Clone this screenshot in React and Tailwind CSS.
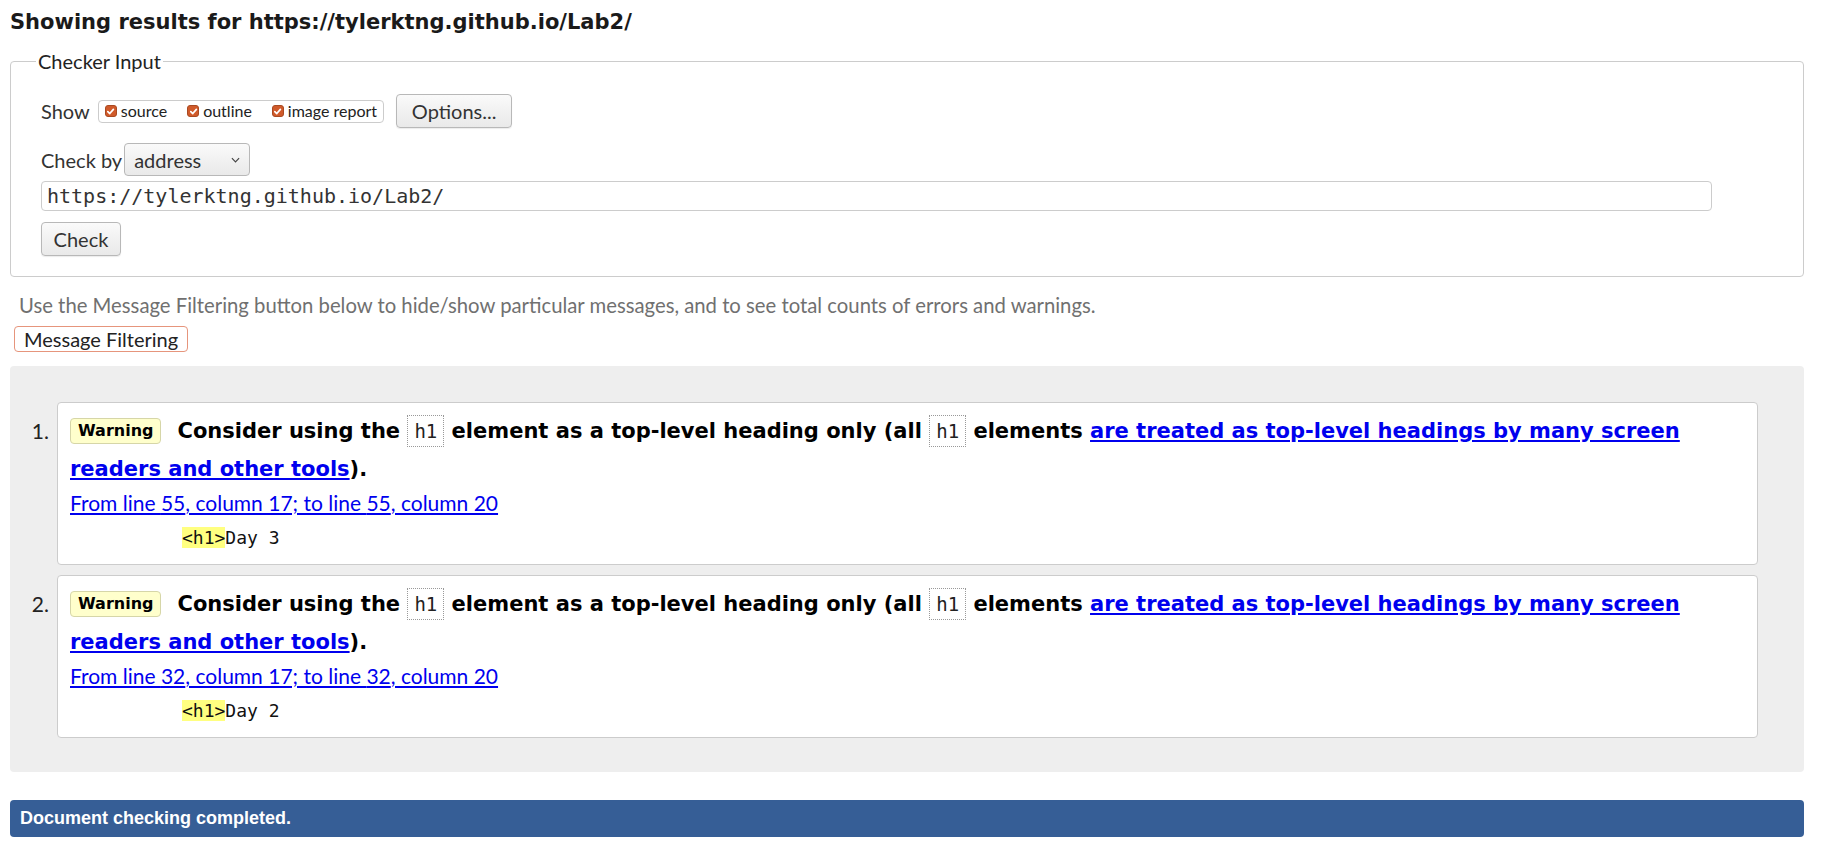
import React from 'react';

// casilla marcada del formulario
function Tick() {
  return (
    <span className="flex items-center justify-center w-[12px] h-[12px] rounded-[3px] bg-[#d05a2a] border border-[#a94a22] shrink-0">
      <svg viewBox="0 0 10 10" className="w-[9px] h-[9px]">
        <path d="M2 5.2 L4.2 7.3 L8.2 2.6" stroke="white" strokeWidth="1.9" fill="none" strokeLinecap="round" strokeLinejoin="round" />
      </svg>
    </span>
  );
}

function Message({ n, line }) {
  return (
    <li className="flex">
      <span className="w-[47px] shrink-0 pr-[8px] pt-[10px] text-right text-[21px] leading-[38px] text-[#222]">{n}.</span>
      <div className="flex-1 bg-white border border-[#ccc] rounded-[4px] pl-[12px] pr-[12px] pt-[9px] pb-[15px]">
        <p className="font-['DejaVu_Sans',sans-serif] font-bold text-[21px] leading-[38px] text-black">
          <span className="inline-block align-[2px] mr-[16px] px-[7px] bg-[#ffffcc] border border-[#d6d6a8] rounded-[4px] text-[16px] leading-[24px]">Warning</span>
          Consider using the{' '}
          <code className="border border-dotted border-[#999] px-[6px] py-[4px] font-['DejaVu_Sans_Mono',monospace] font-normal text-[19px] text-[#222]">h1</code>{' '}
          element as a top-level heading only (all{' '}
          <code className="border border-dotted border-[#999] px-[6px] py-[4px] font-['DejaVu_Sans_Mono',monospace] font-normal text-[19px] text-[#222]">h1</code>{' '}
          elements{' '}
          <a href="#" className="text-[#0000ee] underline">are treated as top-level headings by many screen readers and other tools</a>).
        </p>
        <p className="mt-[3px] text-[21px] leading-[23px]">
          <a href="#" className="text-[#0000ee] underline">From line {line}, column 17; to line {line}, column 20</a>
        </p>
        <p className="mt-[13px] pl-[112px] font-['DejaVu_Sans_Mono',monospace] text-[18px] leading-[22px] text-[#111] whitespace-pre">
          <mark className="bg-[#ffff80] text-[#111]">&lt;h1&gt;</mark>Day {n === 1 ? 3 : 2}
        </p>
      </div>
    </li>
  );
}

export default function App() {
  return (
    <div className="min-h-screen bg-white pl-[10px] pr-[31px] pt-[10px] pb-[20px] text-[#333] font-['Lato',sans-serif]">
      <h2 className="font-['DejaVu_Sans',sans-serif] text-[21px] leading-[24px] font-bold text-[#1a1a1a]">
        Showing results for https://tylerktng.github.io/Lab2/
      </h2>

      {/* Formulario */}
      <fieldset className="mt-[15px] border border-[#ccc] rounded-[4px] pl-[30px] pr-[30px] pt-[21px] pb-[20px]">
        <legend className="-ml-[5px] px-[2px] text-[20px] leading-[24px] text-[#222]">Checker Input</legend>

        <div className="flex items-center h-[34px]">
          <span className="text-[20px] mr-[8px]">Show</span>
          <span className="flex items-center gap-[20px] h-[23px] border border-[#ccc] rounded-[4px] pl-[6px] pr-[6px] text-[16px] text-[#222]">
            <span className="flex items-center gap-[4px]"><Tick />source</span>
            <span className="flex items-center gap-[4px]"><Tick />outline</span>
            <span className="flex items-center gap-[4px]"><Tick />image report</span>
          </span>
          <button className="ml-[12px] h-[34px] w-[116px] border border-[#b8b8b8] rounded-[4px] bg-linear-to-b from-[#fafafa] to-[#e9e9e9] text-[20px] text-[#333] shadow-[0_1px_1px_rgba(0,0,0,0.08)]">
            Options...
          </button>
        </div>

        <div className="mt-[15px] flex items-center h-[33px]">
          <span className="text-[20px]">Check by</span>
          <span className="ml-[2px] flex items-center justify-between h-[33px] w-[126px] pl-[9px] pr-[9px] border border-[#b8b8b8] rounded-[4px] bg-linear-to-b from-[#fafafa] to-[#e9e9e9] text-[20px] text-[#333]">
            address
            <svg viewBox="0 0 10 6" className="w-[9px] h-[6px]">
              <path d="M1 1 L5 5 L9 1" stroke="#444" strokeWidth="1.3" fill="none" />
            </svg>
          </span>
        </div>

        <input
          readOnly
          value="https://tylerktng.github.io/Lab2/"
          className="mt-[5px] block h-[30px] w-[1671px] px-[5px] border border-[#ccc] rounded-[4px] font-['DejaVu_Sans_Mono',monospace] text-[20px] text-[#333] outline-none"
        />

        <button className="mt-[11px] block h-[34px] w-[80px] border border-[#b8b8b8] rounded-[4px] bg-linear-to-b from-[#fafafa] to-[#e9e9e9] text-[20px] text-[#333] shadow-[0_1px_1px_rgba(0,0,0,0.08)]">
          Check
        </button>
      </fieldset>

      <p className="mt-[17px] ml-[9px] text-[20.3px] leading-[23px] text-[#707070]">
        Use the Message Filtering button below to hide/show particular messages, and to see total counts of errors and warnings.
      </p>
      <button className="mt-[9px] ml-[4px] h-[26px] px-[9px] border border-[#e6957c] rounded-[4px] bg-white text-[20px] leading-[22px] text-[#222]">
        Message Filtering
      </button>

      {/* Mensajes */}
      <div className="mt-[13px] bg-[#eeeeee] rounded-[4px] pt-[36px] pb-[34px] pr-[46px]">
        <ol className="flex flex-col gap-[10px]">
          <Message n={1} line={55} />
          <Message n={2} line={32} />
        </ol>
      </div>

      <div className="mt-[28px] h-[37px] flex items-center pl-[10px] bg-[#365e96] rounded-[4px] font-['Liberation_Sans',Arial,sans-serif] font-bold text-[18px] text-white">
        Document checking completed.
      </div>
    </div>
  );
}
